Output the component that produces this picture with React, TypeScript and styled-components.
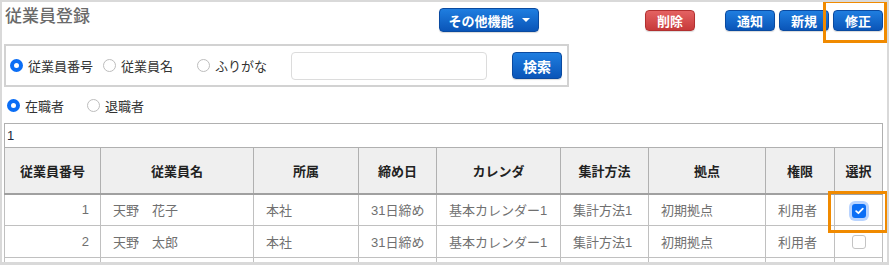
import React from "react";
import styled, { createGlobalStyle, css } from "styled-components";

const Global = createGlobalStyle`
  html, body { margin: 0; padding: 0; background: #fff; }
  body { font-family: "Liberation Sans", "Noto Sans CJK JP", sans-serif; }
  * { box-sizing: border-box; }
`;

const Frame = styled.div`
  position: relative;
  width: 889px;
  height: 265px;
  overflow: hidden;
  border-top: 2px solid #d9d9d9;
  border-left: 2px solid #d9d9d9;
  border-right: 2px solid #d9d9d9;
  border-bottom: 3px solid #d9d9d9;
  background: #fff;
`;

const Header = styled.div`
  display: flex;
  align-items: flex-start;
  height: 42px;
  padding: 0 4px 0 3px;
`;

const Title = styled.h1`
  margin: 2px 0 0;
  font-size: 17px;
  line-height: 22px;
  font-weight: 500;
  color: #6a6a6a;
  font-family: "Noto Sans CJK JP", sans-serif;
`;

const Spacer = styled.div`
  flex: 1;
`;

const buttonBase = css`
  border: 1px solid #0a4aa0;
  border-radius: 4px;
  color: #fff;
  font-family: "Liberation Sans", "Noto Sans CJK JP", sans-serif;
  font-weight: 700;
  font-size: 13px;
  padding: 0;
  display: inline-flex;
  align-items: center;
  justify-content: center;
  background: linear-gradient(#1f7ee0, #0a55b8);
  box-shadow: 0 1px 1px rgba(0, 0, 0, 0.15);
`;

const MenuButton = styled.button`
  ${buttonBase};
  width: 100px;
  height: 24px;
  margin-top: 6px;
  margin-right: 106px;
  gap: 8px;
`;

const Caret = styled.span`
  width: 0;
  height: 0;
  border-left: 4px solid transparent;
  border-right: 4px solid transparent;
  border-top: 4px solid #fff;
`;

const ActionButton = styled.button<{ $danger?: boolean; $gapAfter?: number }>`
  ${buttonBase};
  width: 50px;
  height: 21px;
  margin-top: 8px;
  margin-right: ${(p) => p.$gapAfter ?? 4}px;
  ${(p) =>
    p.$danger &&
    css`
      border-color: #b23030;
      background: linear-gradient(#e46262, #c73a3a);
    `}
  &:last-child { margin-right: 0; }
`;

const SearchBox = styled.div`
  display: flex;
  align-items: center;
  margin-left: 2px;
  width: 565px;
  height: 43px;
  border: 2px solid #d2d2d2;
  padding: 0 5px 0 4px;
`;

const RadioLabel = styled.label<{ $width?: number }>`
  display: inline-flex;
  align-items: center;
  gap: 5px;
  font-size: 13px;
  color: #333;
  width: ${(p) => (p.$width ? `${p.$width}px` : "auto")};
  flex: none;
`;

const RadioDot = styled.span<{ $on?: boolean }>`
  width: 13px;
  height: 13px;
  border-radius: 50%;
  flex: none;
  background: #fff;
  border: ${(p) => (p.$on ? "4px solid #0b6ef5" : "1px solid #bdbdbd")};
`;

const TextInput = styled.input`
  width: 196px;
  height: 28px;
  margin-left: 24px;
  border: 1px solid #dcdcdc;
  border-radius: 4px;
  outline: none;
`;

const SearchButton = styled.button`
  ${buttonBase};
  width: 50px;
  height: 27px;
  margin-left: auto;
  font-size: 14px;
`;

const StatusRow = styled.div`
  display: flex;
  align-items: center;
  height: 36px;
  padding-left: 5px;
`;

const Table = styled.table`
  margin-left: 2px;
  width: 878px;
  border-collapse: collapse;
  table-layout: fixed;
  font-size: 13px;
`;

const CountCell = styled.td`
  height: 24px;
  padding: 0 2px;
  border: 1px solid #b0b0b0;
  color: #1c2940;
  font-size: 13px;
`;

const Th = styled.th`
  height: 46px;
  background: #efefef;
  border: 1px solid #b0b0b0;
  border-bottom: 2px solid #a0a0a0;
  color: #222;
  font-weight: 700;
  text-align: center;
  padding: 0;
`;

const Td = styled.td<{ $align?: "left" | "right" | "center" }>`
  height: 32px;
  border: 1px solid #c0c0c0;
  color: #707070;
  padding: 0 11px 0 12px;
  text-align: ${(p) => p.$align ?? "left"};
  white-space: nowrap;
`;

const Check = styled.span<{ $on?: boolean }>`
  display: inline-flex;
  align-items: center;
  justify-content: center;
  vertical-align: middle;
  width: 14px;
  height: 14px;
  border-radius: 3px;
  ${(p) =>
    p.$on
      ? css`
          background: #0b6ef5;
          box-shadow: 0 0 0 3px #b9d4ff;
        `
      : css`
          background: #fff;
          border: 1px solid #c4c4c4;
        `}
`;

const Highlight = styled.div<{ $x: number; $y: number; $w: number; $h: number }>`
  position: absolute;
  left: ${(p) => p.$x}px;
  top: ${(p) => p.$y}px;
  width: ${(p) => p.$w}px;
  height: ${(p) => p.$h}px;
  border: 3px solid #f08a00;
  pointer-events: none;
`;

const cols = [96, 153, 105, 78, 124, 88, 117, 69, 48];
const heads = ["従業員番号", "従業員名", "所属", "締め日", "カレンダ", "集計方法", "拠点", "権限", "選択"];
const rows = [
  { no: 1, name: "天野　花子", on: true },
  { no: 2, name: "天野　太郎", on: false },
];

export default function App() {
  return (
    <>
      <Global />
      <Frame>
        <Header>
          <Title>従業員登録</Title>
          <Spacer />
          <MenuButton>
            その他機能 <Caret />
          </MenuButton>
          <ActionButton $danger $gapAfter={30}>削除</ActionButton>
          <ActionButton>通知</ActionButton>
          <ActionButton>新規</ActionButton>
          <ActionButton>修正</ActionButton>
        </Header>
        <SearchBox>
          <RadioLabel $width={93}>
            <RadioDot $on />
            従業員番号
          </RadioLabel>
          <RadioLabel $width={94}>
            <RadioDot />
            従業員名
          </RadioLabel>
          <RadioLabel>
            <RadioDot />
            ふりがな
          </RadioLabel>
          <TextInput />
          <SearchButton>検索</SearchButton>
        </SearchBox>
        <StatusRow>
          <RadioLabel $width={80}>
            <RadioDot $on />
            在職者
          </RadioLabel>
          <RadioLabel>
            <RadioDot />
            退職者
          </RadioLabel>
        </StatusRow>
        <Table>
          <colgroup>
            {cols.map((w, i) => (
              <col key={i} style={{ width: w }} />
            ))}
          </colgroup>
          <tbody>
            <tr>
              <CountCell colSpan={9}>1</CountCell>
            </tr>
            <tr>
              {heads.map((h) => (
                <Th key={h}>{h}</Th>
              ))}
            </tr>
            {rows.map((r) => (
              <tr key={r.no}>
                <Td $align="right">{r.no}</Td>
                <Td>{r.name}</Td>
                <Td>本社</Td>
                <Td>31日締め</Td>
                <Td>基本カレンダー1</Td>
                <Td>集計方法1</Td>
                <Td>初期拠点</Td>
                <Td>利用者</Td>
                <Td $align="center">
                  <Check $on={r.on}>
                    {r.on && (
                      <svg width="9" height="8" viewBox="0 0 9 8">
                        <path d="M1.2 4.2 L3.4 6.2 L7.8 1.6" fill="none" stroke="#fff" strokeWidth="1.8" strokeLinecap="round" strokeLinejoin="round" />
                      </svg>
                    )}
                  </Check>
                </Td>
              </tr>
            ))}
            <tr>
              {cols.map((_, i) => (
                <Td key={i} />
              ))}
            </tr>
          </tbody>
        </Table>
        <Highlight $x={821} $y={-2} $w={64} $h={43} />
        <Highlight $x={826} $y={189} $w={60} $h={42} />
      </Frame>
    </>
  );
}
